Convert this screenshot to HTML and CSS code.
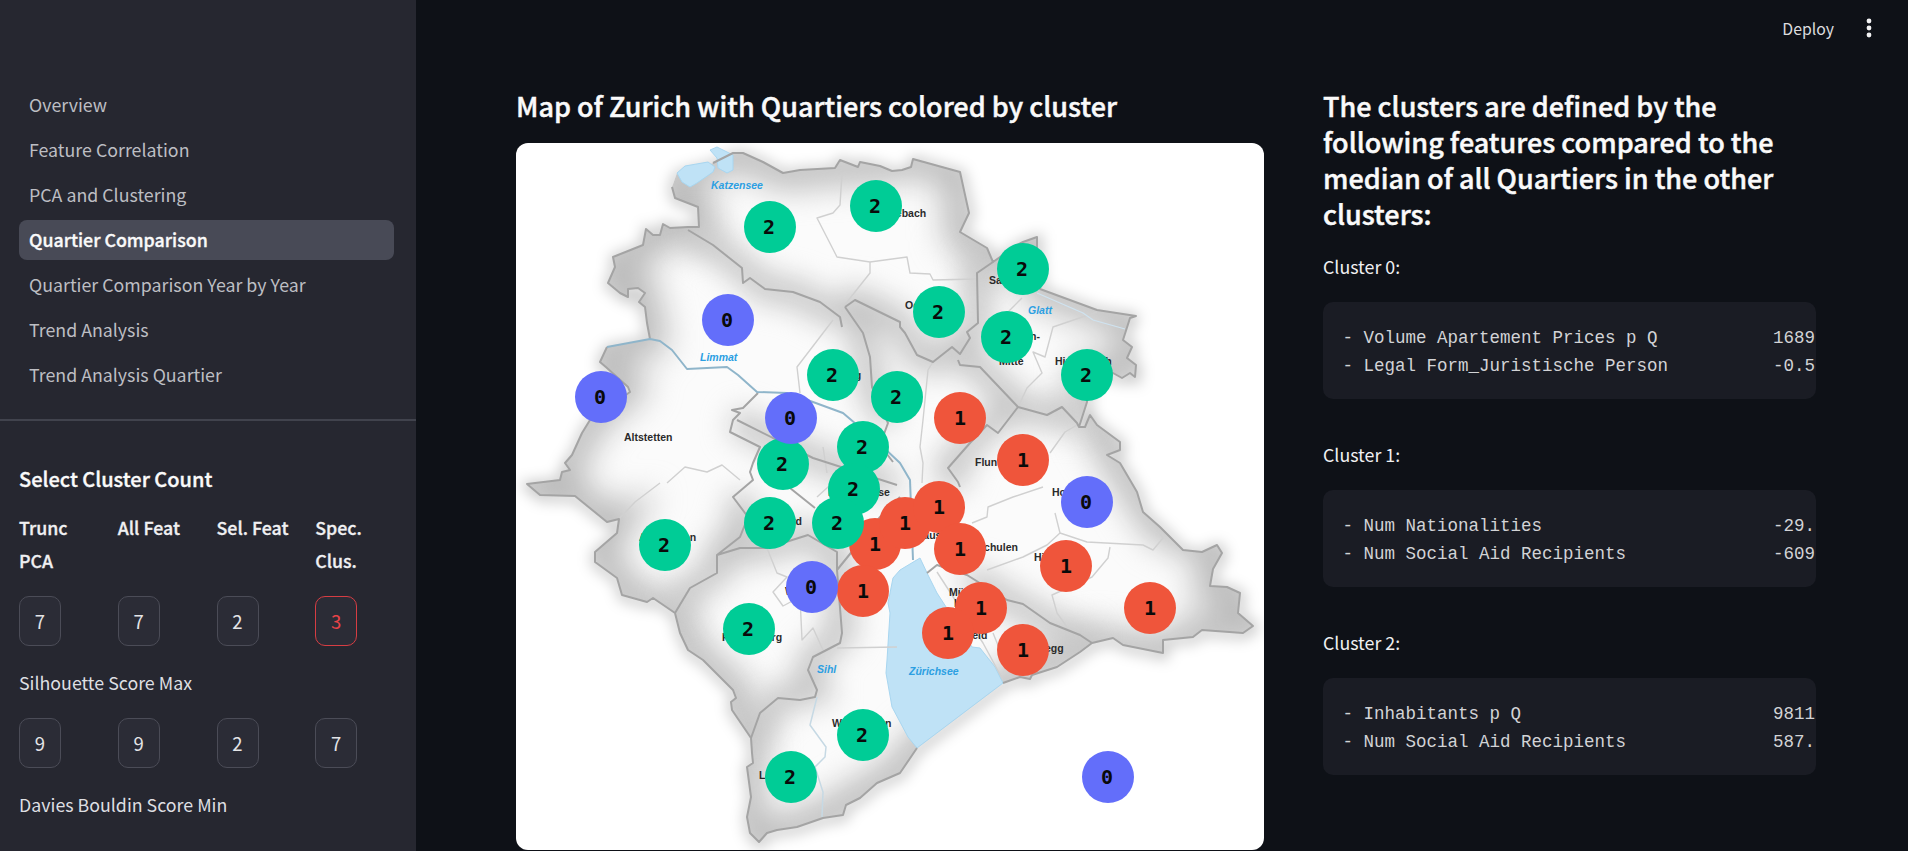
FILE: index.html
```html
<!DOCTYPE html>
<html lang="en">
<head>
<meta charset="utf-8">
<title>Quartier Comparison</title>
<link rel="stylesheet" href="styles.css">
</head>
<body>
<div class="app">
  <aside class="sidebar">
    <nav class="nav">
      <a class="nav-item">Overview</a>
      <a class="nav-item">Feature Correlation</a>
      <a class="nav-item">PCA and Clustering</a>
      <a class="nav-item active">Quartier Comparison</a>
      <a class="nav-item">Quartier Comparison Year by Year</a>
      <a class="nav-item">Trend Analysis</a>
      <a class="nav-item">Trend Analysis Quartier</a>
    </nav>
    <hr class="divider">
    <section class="counts">
      <h4 class="counts-title">Select Cluster Count</h4>
      <div class="label-row">
        <div>Trunc<br>PCA</div>
        <div>All Feat</div>
        <div>Sel. Feat</div>
        <div>Spec.<br>Clus.</div>
      </div>
      <div class="value-row">
        <div class="cell"><span class="chip">7</span></div>
        <div class="cell"><span class="chip">7</span></div>
        <div class="cell"><span class="chip">2</span></div>
        <div class="cell"><span class="chip chip-on">3</span></div>
      </div>
      <p class="metric">Silhouette Score Max</p>
      <div class="value-row">
        <div class="cell"><span class="chip">9</span></div>
        <div class="cell"><span class="chip">9</span></div>
        <div class="cell"><span class="chip">2</span></div>
        <div class="cell"><span class="chip">7</span></div>
      </div>
      <p class="metric">Davies Bouldin Score Min</p>
    </section>
  </aside>
  <main class="main">
    <header class="topbar">
      <span class="deploy">Deploy</span>
      <svg class="kebab" width="6" height="20" viewBox="0 0 6 20"><circle cx="3" cy="3" r="2.4"/><circle cx="3" cy="10" r="2.4"/><circle cx="3" cy="17" r="2.4"/></svg>
    </header>
    <div class="columns">
      <section class="map-col">
        <h3 class="heading">Map of Zurich with Quartiers colored by cluster</h3>
        <div class="map-card">
          <svg class="map" viewBox="516 143 748 707" width="748" height="707">
            <defs>
              <clipPath id="city"><path d="M672 187L675 198L698 207L699 227L688 227L670 228L663 224L660 235L653 235L646 229L643 245L613 257L615 267L608 283L620 293L628 297L628 289L638 288L645 293L639 302L645 307L647 323L650 339L607 347L600 362L607 368L628 387L630 392L590 420L582 433L572 455L565 463L570 470L562 472L560 480L527 484L540 495L575 496L607 522L619 519L617 533L595 552L595 562L617 578L622 595L647 602L653 598L675 613L680 633L688 650L703 660L733 690L736 698L731 702L732 710L751 738L752 753L753 763L747 767L751 797L747 817L750 833L759 842L767 833L777 830L797 827L823 818L843 815L846 805L860 798L877 783L900 773L917 748L1003 683L1020 677L1030 679L1032 675L1057 667L1080 652L1092 643L1113 638L1123 645L1163 653L1163 640L1193 637L1202 630L1243 633L1253 626L1238 613L1240 593L1227 587L1210 586L1213 569L1222 553L1217 545L1202 552L1183 550L1160 527L1143 512L1137 492L1130 480L1120 463L1107 455L1120 450L1120 442L1097 425L1090 415L1085 427L1079 427L1087 402L1087 375L1113 373L1122 378L1130 373L1135 377L1136 365L1127 358L1132 347L1123 340L1130 318L1136 316L1097 310L1040 289L1037 247L1037 237L1023 242L1017 245L993 262L987 248L960 232L969 213L960 172L913 159L911 167L902 170L892 171L880 166L860 162L858 167L840 160L835 168L800 170L783 173L763 162L743 153L733 153L713 163L677 173Z"/></clipPath>
            </defs>
            <path class="outer-shadow" d="M672 187L675 198L698 207L699 227L688 227L670 228L663 224L660 235L653 235L646 229L643 245L613 257L615 267L608 283L620 293L628 297L628 289L638 288L645 293L639 302L645 307L647 323L650 339L607 347L600 362L607 368L628 387L630 392L590 420L582 433L572 455L565 463L570 470L562 472L560 480L527 484L540 495L575 496L607 522L619 519L617 533L595 552L595 562L617 578L622 595L647 602L653 598L675 613L680 633L688 650L703 660L733 690L736 698L731 702L732 710L751 738L752 753L753 763L747 767L751 797L747 817L750 833L759 842L767 833L777 830L797 827L823 818L843 815L846 805L860 798L877 783L900 773L917 748L1003 683L1020 677L1030 679L1032 675L1057 667L1080 652L1092 643L1113 638L1123 645L1163 653L1163 640L1193 637L1202 630L1243 633L1253 626L1238 613L1240 593L1227 587L1210 586L1213 569L1222 553L1217 545L1202 552L1183 550L1160 527L1143 512L1137 492L1130 480L1120 463L1107 455L1120 450L1120 442L1097 425L1090 415L1085 427L1079 427L1087 402L1087 375L1113 373L1122 378L1130 373L1135 377L1136 365L1127 358L1132 347L1123 340L1130 318L1136 316L1097 310L1040 289L1037 247L1037 237L1023 242L1017 245L993 262L987 248L960 232L969 213L960 172L913 159L911 167L902 170L892 171L880 166L860 162L858 167L840 160L835 168L800 170L783 173L763 162L743 153L733 153L713 163L677 173Z"/>
            <path class="land" d="M672 187L675 198L698 207L699 227L688 227L670 228L663 224L660 235L653 235L646 229L643 245L613 257L615 267L608 283L620 293L628 297L628 289L638 288L645 293L639 302L645 307L647 323L650 339L607 347L600 362L607 368L628 387L630 392L590 420L582 433L572 455L565 463L570 470L562 472L560 480L527 484L540 495L575 496L607 522L619 519L617 533L595 552L595 562L617 578L622 595L647 602L653 598L675 613L680 633L688 650L703 660L733 690L736 698L731 702L732 710L751 738L752 753L753 763L747 767L751 797L747 817L750 833L759 842L767 833L777 830L797 827L823 818L843 815L846 805L860 798L877 783L900 773L917 748L1003 683L1020 677L1030 679L1032 675L1057 667L1080 652L1092 643L1113 638L1123 645L1163 653L1163 640L1193 637L1202 630L1243 633L1253 626L1238 613L1240 593L1227 587L1210 586L1213 569L1222 553L1217 545L1202 552L1183 550L1160 527L1143 512L1137 492L1130 480L1120 463L1107 455L1120 450L1120 442L1097 425L1090 415L1085 427L1079 427L1087 402L1087 375L1113 373L1122 378L1130 373L1135 377L1136 365L1127 358L1132 347L1123 340L1130 318L1136 316L1097 310L1040 289L1037 247L1037 237L1023 242L1017 245L993 262L987 248L960 232L969 213L960 172L913 159L911 167L902 170L892 171L880 166L860 162L858 167L840 160L835 168L800 170L783 173L763 162L743 153L733 153L713 163L677 173Z"/>
            <g clip-path="url(#city)">
              <path class="inner-shade" d="M672 187L675 198L698 207L699 227L670 228L660 235L646 229L643 245L613 257L608 283L628 297L638 288L645 307L650 339L607 347L600 362L628 387L590 420L572 455L560 480L527 484L540 495L575 496L607 522L619 519L595 552L617 578L622 595L675 613L688 650L733 690L751 738L747 767L747 817L759 842L823 818L900 773L917 748L1003 683L1092 643L1163 653L1202 630L1253 626L1238 613L1240 593L1210 586L1222 553L1160 527L1130 480L1097 425L1087 375L1136 365L1130 318L1097 310L1040 289L1037 237L993 262L960 232L960 172L913 159L880 166L835 168L783 173L743 153L677 173Z"/>
              <path class="inner-shade thin" d="M688 230L713 245L742 268L765 289L793 292L840 317M845 307L855 300L900 322L917 355L933 362L952 347L970 338L978 323L977 273L993 262M845 307L863 333L872 387L888 423M958 360L980 367L1018 407L987 425L948 468L960 487M1018 407L1047 415L1062 407L1079 427M733 420L813 458L897 485M733 497L748 517L717 555L717 573L690 588L675 613M717 555L767 548L808 535L837 552L842 633L813 657L808 670L817 690L778 698L751 738M967 575L1007 600L1050 623L1092 643"/>
            </g>
            <path class="lake" d="M920 558L900 570L893 578L888 603L890 613L887 660L886 673L892 707L908 737L917 748L1003 683L995 667L980 648L972 647L937 593L928 575Z"/>
            <path class="lake" d="M677 173L685 166L708 162L715 167L713 172L697 183L690 187L682 182Z"/>
            <path class="lake" d="M710 150L717 147L733 155L733 170L727 173L718 168L717 158Z"/>
            <path class="light" d="M842 173L840 205L833 213L817 218L837 257L870 262L870 273L843 307M870 262L907 257L910 273L930 274L933 280L977 279M833 320L797 367L800 393M933 362L928 370L923 420L920 447L923 463L922 483M1022 298L1008 312M1097 312L1053 327L1045 357L1033 352L1042 373L1027 388L1018 407M1077 425L1065 432L1050 453M1055 513L1060 533L1087 542L1143 545L1153 550L1163 538L1143 512M1110 547L1108 558L1092 577L1052 595L1057 613L1067 627L1080 635M987 570L1023 557L1047 545L1060 533M972 523L987 517L988 507L1013 497L1043 487M937 572L983 643L1003 680M993 633L1011 677M667 483L685 467L707 472L722 465L740 480M660 483L635 502L619 519M767 548L777 573L787 577L773 592L783 606L800 597L802 640L813 628L823 650M837 648L897 647M817 497L828 487L847 480M823 447L827 473"/>
            <path class="sihl" d="M817 697L810 725L826 747L825 757L815 767L823 792L822 817"/>
            <path class="glatt" d="M1037 293L1083 313L1093 320L1125 329"/>
            <path class="border" d="M688 230L713 245L742 268L743 283L750 278L765 289L793 292L820 302L840 317L842 327M845 307L855 300L900 322L900 327L905 333L917 355L933 362L952 347L960 354L970 338L967 332L978 323L977 273L993 262M845 307L863 333L870 357L872 387L888 423L880 445L893 462M958 360L960 365L980 367L1018 407L998 433L987 425L970 443L948 468L958 482L960 487M1018 407L1047 415L1062 407L1077 423L1079 427M737 420L813 458L897 485M758 393L743 408L732 410L740 413L733 420L730 432L760 447L753 463L750 472L753 480L733 497L748 517L740 537L717 555L717 573L690 588L675 613M717 555L740 548L767 548L808 535L837 552L837 570L842 633L840 643L813 657L808 670L817 690L815 697L800 700L778 698L760 713L751 738M780 480L815 508M837 570L880 517L900 497M927 573L937 565L967 575L1007 600L1023 604L1050 623L1080 635L1092 643"/>
            <path class="outline" d="M672 187L675 198L698 207L699 227L688 227L670 228L663 224L660 235L653 235L646 229L643 245L613 257L615 267L608 283L620 293L628 297L628 289L638 288L645 293L639 302L645 307L647 323L650 339M607 347L600 362L607 368L628 387L630 392L590 420L582 433L572 455L565 463L570 470L562 472L560 480L527 484L540 495L575 496L607 522L619 519L617 533L595 552L595 562L617 578L622 595L647 602L653 598L675 613L680 633L688 650L703 660L733 690L736 698L731 702L732 710L751 738L752 753L753 763L747 767L751 797L747 817L750 833L759 842L767 833L777 830L797 827L823 818L843 815L846 805L860 798L877 783L900 773L917 748M1003 683L1020 677L1030 679L1032 675L1057 667L1080 652L1092 643L1113 638L1123 645L1163 653L1163 640L1193 637L1202 630L1243 633L1253 626L1238 613L1240 593L1227 587L1210 586L1213 569L1222 553L1217 545L1202 552L1183 550L1160 527L1143 512L1137 492L1130 480L1120 463L1107 455L1120 450L1120 442L1097 425L1090 415L1085 427L1079 427L1087 402L1087 375L1113 373L1122 378L1130 373L1135 377L1136 365L1127 358L1132 347L1123 340L1130 318L1136 316L1097 310L1040 289L1037 247L1037 237L1023 242L1017 245L993 262L987 248L960 232L969 213L960 172L913 159L911 167L902 170L892 171L880 166L860 162L858 167L840 160L835 168L800 170L783 173L763 162L743 153L733 153L713 163"/>
            <path class="limmat" d="M607 347L650 339L660 341L672 350L687 369L727 367L738 375L757 392L787 393L813 402L843 413L883 447L900 463L910 480L913 560"/>
            <text class="water" x="711" y="189">Katzensee</text>
            <text class="water" x="700" y="361">Limmat</text>
            <text class="water" x="1028" y="314">Glatt</text>
            <text class="water" x="817" y="673">Sihl</text>
            <text class="water" x="909" y="675">Zürichsee</text>
            <text class="place" x="624" y="441">Altstetten</text>
            <text class="place" x="883" y="217">Seebach</text>
            <text class="place" x="905" y="309">Oerlikon</text>
            <text class="place" x="989" y="284">Saatlen</text>
            <text class="place" x="1040" y="340" text-anchor="end">dingen-</text>
            <text class="place" x="999" y="365">Mitte</text>
            <text class="place" x="1055" y="365">Hirzenbach</text>
            <text class="place" x="975" y="466">Fluntern</text>
            <text class="place" x="828" y="379">Höngg</text>
            <text class="place" x="639" y="541">Albisrieden</text>
            <text class="place" x="778" y="525">Hard</text>
            <text class="place" x="828" y="496">Langstrasse</text>
            <text class="place" x="722" y="641">Friesenberg</text>
            <text class="place" x="785" y="595">Wiedikon</text>
            <text class="place" x="832" y="727">Wollishofen</text>
            <text class="place" x="759" y="779">Leimbach</text>
            <text class="place" x="1052" y="496">Hottingen</text>
            <text class="place" x="1034" y="561">Hirslanden</text>
            <text class="place" x="952" y="551">Hochschulen</text>
            <text class="place" x="900" y="539">Rathaus</text>
            <text class="place" x="949" y="596">Mühle-</text>
            <text class="place" x="954" y="607">bach</text>
            <text class="place" x="950" y="639">Seefeld</text>
            <text class="place" x="1020" y="652">Weinegg</text>
            <g class="c1">
              <circle cx="960" cy="418" r="26"/><text x="960" y="425">1</text>
              <circle cx="1023" cy="460" r="26"/><text x="1023" y="467">1</text>
              <circle cx="875" cy="544" r="26"/><text x="875" y="551">1</text>
              <circle cx="905" cy="523" r="26"/><text x="905" y="530">1</text>
              <circle cx="939" cy="507" r="26"/><text x="939" y="514">1</text>
              <circle cx="960" cy="549" r="26"/><text x="960" y="556">1</text>
              <circle cx="863" cy="591" r="26"/><text x="863" y="598">1</text>
              <circle cx="1066" cy="566" r="26"/><text x="1066" y="573">1</text>
              <circle cx="1150" cy="608" r="26"/><text x="1150" y="615">1</text>
              <circle cx="981" cy="608" r="26"/><text x="981" y="615">1</text>
              <circle cx="948" cy="633" r="26"/><text x="948" y="640">1</text>
              <circle cx="1023" cy="650" r="26"/><text x="1023" y="657">1</text>
            </g>
            <g class="c2">
              <circle cx="770" cy="227" r="26"/><text x="769" y="234">2</text>
              <circle cx="876" cy="206" r="26"/><text x="875" y="213">2</text>
              <circle cx="833" cy="375" r="26"/><text x="832" y="382">2</text>
              <circle cx="897" cy="397" r="26"/><text x="896" y="404">2</text>
              <circle cx="783" cy="464" r="26"/><text x="782" y="471">2</text>
              <circle cx="863" cy="447" r="26"/><text x="862" y="454">2</text>
              <circle cx="854" cy="489" r="26"/><text x="853" y="496">2</text>
              <circle cx="1023" cy="269" r="26"/><text x="1022" y="276">2</text>
              <circle cx="939" cy="312" r="26"/><text x="938" y="319">2</text>
              <circle cx="1007" cy="337" r="26"/><text x="1006" y="344">2</text>
              <circle cx="1087" cy="375" r="26"/><text x="1086" y="382">2</text>
              <circle cx="770" cy="523" r="26"/><text x="769" y="530">2</text>
              <circle cx="838" cy="523" r="26"/><text x="837" y="530">2</text>
              <circle cx="665" cy="545" r="26"/><text x="664" y="552">2</text>
              <circle cx="749" cy="629" r="26"/><text x="748" y="636">2</text>
              <circle cx="863" cy="735" r="26"/><text x="862" y="742">2</text>
              <circle cx="791" cy="777" r="26"/><text x="790" y="784">2</text>
            </g>
            <g class="c0">
              <circle cx="728" cy="320" r="26"/><text x="727" y="327">0</text>
              <circle cx="601" cy="397" r="26"/><text x="600" y="404">0</text>
              <circle cx="791" cy="418" r="26"/><text x="790" y="425">0</text>
              <circle cx="812" cy="587" r="26"/><text x="811" y="594">0</text>
              <circle cx="1087" cy="502" r="26"/><text x="1086" y="509">0</text>
              <circle cx="1108" cy="777" r="26"/><text x="1107" y="784">0</text>
            </g>
          </svg>
        </div>
      </section>
      <section class="text-col">
        <h3 class="heading">The clusters are defined by the following features compared to the median of all Quartiers in the other clusters:</h3>
        <p class="cluster-name first">Cluster 0:</p>
        <pre class="code">- Volume Apartement Prices p Q           1689
- Legal Form_Juristische Person          -0.5</pre>
        <p class="cluster-name">Cluster 1:</p>
        <pre class="code">- Num Nationalities                      -29.
- Num Social Aid Recipients              -609</pre>
        <p class="cluster-name">Cluster 2:</p>
        <pre class="code">- Inhabitants p Q                        9811
- Num Social Aid Recipients              587.</pre>
      </section>
    </div>
  </main>
</div>
</body>
</html>
```

FILE: styles.css
```css
* { box-sizing: border-box; }
html, body { margin: 0; padding: 0; height: 100%; }
body {
  background: #0e1117;
  color: #fafafa;
  font-family: "Noto Sans CJK SC", "Noto Sans", sans-serif;
  overflow: hidden;
}
.app { display: flex; height: 851px; overflow: hidden; }

/* sidebar */
.sidebar { width: 416px; flex: none; background: #262730; overflow: hidden; }
.nav { display: flex; flex-direction: column; gap: 5px; padding: 85px 22px 0 19px; }
.nav-item {
  height: 40px; padding: 0 10px 2px; border-radius: 8px;
  display: flex; align-items: center;
  font-size: 17.8px; color: #bdbec3;
}
.nav-item.active { background: #484a56; color: #fafafa; font-weight: 500; -webkit-text-stroke: .35px #fafafa; }
.divider { border: 0; height: 2px; background: #41434d; margin: 24px 0 0; }
.counts { padding: 43px 2px 0 19px; }
.counts-title { margin: 0; font-size: 20px; line-height: 30px; font-weight: 500; -webkit-text-stroke: .35px #fafafa; }
.label-row, .value-row { display: grid; grid-template-columns: repeat(4, 1fr); }
.label-row { margin-top: 17px; font-size: 17.8px; line-height: 33px; font-weight: 500; -webkit-text-stroke: .3px #f0f0f2; color: #f0f0f2; }
.value-row { margin-top: 19px; }
.chip {
  width: 42px; height: 50px; border-radius: 10px;
  border: 1.5px solid #4b4c57; background: #2b2c36;
  display: flex; align-items: center; justify-content: center;
  font-size: 18.5px; color: #e4e4e7;
}
.chip-on { border-color: #d63d43; color: #ea4348; }
.metric { margin: 22px 0 0; font-size: 17.8px; line-height: 28px; padding-bottom: 2px; color: #dedfe2; }
.metric + .value-row { margin-top: 20px; }

/* main */
.main { flex: 1; min-width: 0; }
.topbar { height: 56px; display: flex; align-items: center; justify-content: flex-end; padding-right: 36px; }
.deploy { font-size: 15.8px; color: #dcdddf; margin-right: 32px; }
.kebab { fill: #f2f2f3; display: block; }
.columns { display: flex; gap: 59px; padding: 32px 0 0 100px; }
.map-col { width: 748px; flex: none; }
.text-col { width: 493px; flex: none; }
.heading { margin: 0; font-size: 27px; line-height: 36px; font-weight: 500; -webkit-text-stroke: .45px #fafafa; color: #fafafa; }
.map-card { margin-top: 19px; height: 707px; background: #fff; border-radius: 12px; overflow: hidden; }
.map { display: block; }

.outer-shadow { fill: none; stroke: rgba(0,0,0,.24); stroke-width: 8; filter: blur(7px); transform: translate(1px, 2px); }
.land { fill: #fbfbfb; }
.inner-shade { fill: none; stroke: #b8b8b8; stroke-width: 32; filter: blur(16px); }
.inner-shade.thin { stroke: #c4c4c4; stroke-width: 26; filter: blur(14px); }
.lake { fill: #bfe2f6; stroke: #a8d6f0; stroke-width: 1; }
.light { fill: none; stroke: #d0d0d0; stroke-width: 1.4; stroke-linejoin: round; filter: blur(.4px); }
.sihl { fill: none; stroke: #c6d9e4; stroke-width: 1.5; filter: blur(.4px); }
.glatt { fill: none; stroke: #cfe3f0; stroke-width: 1.2; filter: blur(.4px); }
.border { fill: none; stroke: #a4a4a4; stroke-width: 2; stroke-linejoin: round; filter: blur(.4px); }
.outline { fill: none; stroke: #a4a4a4; stroke-width: 2; stroke-linejoin: round; filter: blur(.4px); }
.limmat { fill: none; stroke: #8fb5ca; stroke-width: 2; stroke-linejoin: round; filter: blur(.4px); }
.place { font-family: "Liberation Sans", sans-serif; font-size: 10.5px; font-weight: 700; fill: #2a2a2a; }
.water { font-family: "Liberation Sans", sans-serif; font-size: 10.5px; font-weight: 700; font-style: italic; fill: #2c9fe2; }
.c0 circle { fill: #636efa; }
.c1 circle { fill: #ef553b; }
.c2 circle { fill: #00cc96; }
.c0 text, .c1 text, .c2 text {
  font-family: "DejaVu Sans Mono", monospace; font-size: 20px; font-weight: 700;
  text-anchor: middle; fill: #0a0a0a;
}

/* right column */
.cluster-name { margin: 41px 0 0; height: 30px; font-size: 17.8px; line-height: 28px; color: #f0f0f2; }
.cluster-name.first { margin-top: 20px; }
.code {
  margin: 20px 0 0; height: 97px; padding: 22px 0 0 19.5px;
  background: #1a1c24; border-radius: 10px; overflow: hidden;
  font-family: "Liberation Mono", "DejaVu Sans Mono", monospace;
  font-size: 17.5px; line-height: 28px; color: #d2d3d6;
}
```
